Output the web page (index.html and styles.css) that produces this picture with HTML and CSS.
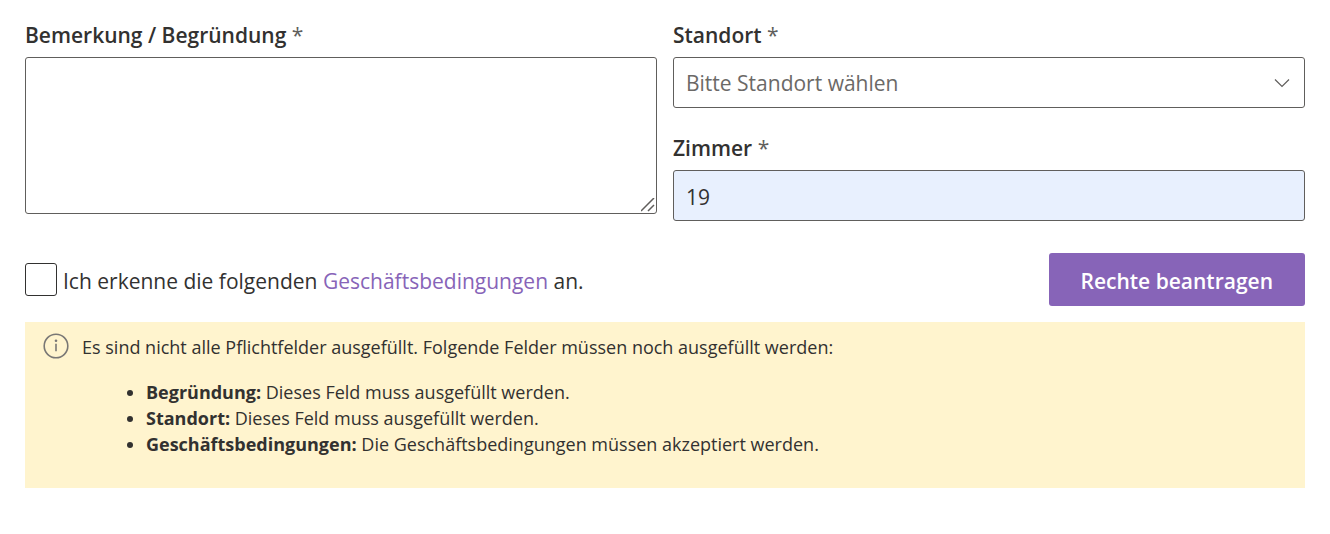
FILE: index.html
```html
<!DOCTYPE html>
<html lang="de">

<head>
  <meta charset="utf-8">
  <meta name="viewport" content="width=device-width, initial-scale=1">
  <title>Rechte beantragen</title>
  <link rel="stylesheet" href="styles.css">
</head>

<body>
  <form class="request-form">
    <div class="fields">
      <div class="field">
        <label class="label" for="reason">Bemerkung / Begründung <span class="required">*</span></label>
        <textarea class="control control-area" id="reason"></textarea>
      </div>
      <div class="column">
        <div class="field">
          <label class="label" for="location">Standort <span class="required">*</span></label>
          <div class="select-wrap">
            <select class="control control-select" id="location">
              <option value="">Bitte Standort wählen</option>
            </select>
            <svg class="chevron" viewBox="0 0 16 10" aria-hidden="true">
              <path d="M1 1.5l7 7 7-7" />
            </svg>
          </div>
        </div>
        <div class="field">
          <label class="label" for="room">Zimmer <span class="required">*</span></label>
          <input class="control control-filled" id="room" type="text" value="19">
        </div>
      </div>
    </div>

    <div class="actions">
      <div class="terms">
        <input class="checkbox" id="terms" type="checkbox">
        <label class="terms-label" for="terms">Ich erkenne die folgenden <a class="link" href="#">Geschäftsbedingungen</a> an.</label>
      </div>
      <button class="button" type="submit">Rechte beantragen</button>
    </div>

    <div class="message" role="status">
      <svg class="info-icon" viewBox="0 0 26 26" aria-hidden="true">
        <circle class="info-ring" cx="13" cy="13" r="11.8" />
        <path class="info-stem" d="M13 10.8v7.4" />
        <circle class="info-dot" cx="13" cy="7.8" r="1.3" />
      </svg>
      <div class="message-body">
        <p class="message-text">Es sind nicht alle Pflichtfelder ausgefüllt. Folgende Felder müssen noch ausgefüllt werden:</p>
        <ul class="message-list">
          <li><strong>Begründung:</strong> Dieses Feld muss ausgefüllt werden.</li>
          <li><strong>Standort:</strong> Dieses Feld muss ausgefüllt werden.</li>
          <li><strong>Geschäftsbedingungen:</strong> Die Geschäftsbedingungen müssen akzeptiert werden.</li>
        </ul>
      </div>
    </div>
  </form>
</body>

</html>
```
FILE: styles.css
```css
* {
  box-sizing: border-box;
}

body {
  margin: 0;
  background: #fff;
  color: #323130;
  font: 21px/30px "Segoe UI", "Open Sans", "Noto Sans", sans-serif;
}

.request-form {
  padding: 20px 25px;
}

.fields {
  display: grid;
  grid-template-columns: 1fr 1fr;
  align-items: start;
  gap: 16px;
}

.column {
  display: flex;
  flex-direction: column;
  gap: 25px;
}

.field {
  display: flex;
  flex-direction: column;
  gap: 7px;
}

.label {
  font-weight: 600;
}

.required {
  color: #605e5c;
  font-weight: 400;
}

.control {
  display: block;
  width: 100%;
  height: 51px;
  margin: 0;
  padding: 0 12px;
  background: #fff;
  border: 1px solid #605e5c;
  border-radius: 3px;
  color: inherit;
  font: inherit;
}

.control-area {
  height: 157px;
  padding: 8px 12px;
  resize: vertical;
}

/* two diagonal strokes instead of the default grip */
.control-area::-webkit-resizer {
  background: url("data:image/svg+xml,%3Csvg xmlns='http://www.w3.org/2000/svg' viewBox='0 0 15 15'%3E%3Cpath d='M0 13L13 0M7 13L13 7' fill='none' stroke='%23605e5c' stroke-width='1.5'/%3E%3C/svg%3E") no-repeat;
}

.select-wrap {
  position: relative;
}

.control-select {
  appearance: none;
  padding-right: 48px;
  color: #6b6967;
}

.chevron {
  position: absolute;
  top: 21px;
  right: 15px;
  width: 16px;
  height: 10px;
  fill: none;
  stroke: #605e5c;
  stroke-width: 1.2;
  pointer-events: none;
}

.control-filled {
  padding-top: 2px;
  background: #e8f0fe;
}

.actions {
  display: flex;
  align-items: center;
  justify-content: space-between;
  margin: 32px 0 16px;
}

.terms {
  display: flex;
  align-items: center;
  gap: 6px;
}

.terms-label {
  padding-top: 2px;
}

.checkbox {
  appearance: none;
  flex: none;
  width: 32px;
  height: 33px;
  margin: 0;
  background: #fff;
  border: 1px solid #323130;
  border-radius: 3px;
}

.checkbox:checked {
  background: #8764b8;
}

.link {
  color: #8764b8;
  text-decoration: none;
}

.button {
  height: 53px;
  padding: 2px 32px 0;
  background: #8764b8;
  border: 0;
  border-radius: 3px;
  color: #fff;
  font: inherit;
  font-weight: 600;
}

.message {
  display: flex;
  gap: 13px;
  padding: 11px 18px 31px;
  background: #fff4ce;
  font-size: 18px;
  line-height: 26px;
}

.info-icon {
  flex: none;
  width: 26px;
  height: 26px;
}

.info-ring,
.info-stem {
  fill: none;
  stroke: #797775;
  stroke-width: 1.6;
}

.info-dot {
  fill: #797775;
}

.message-text {
  margin: 0;
  padding-top: 1px;
}

.message-list {
  margin: 19px 0 0;
  padding-left: 64px;
}
```
